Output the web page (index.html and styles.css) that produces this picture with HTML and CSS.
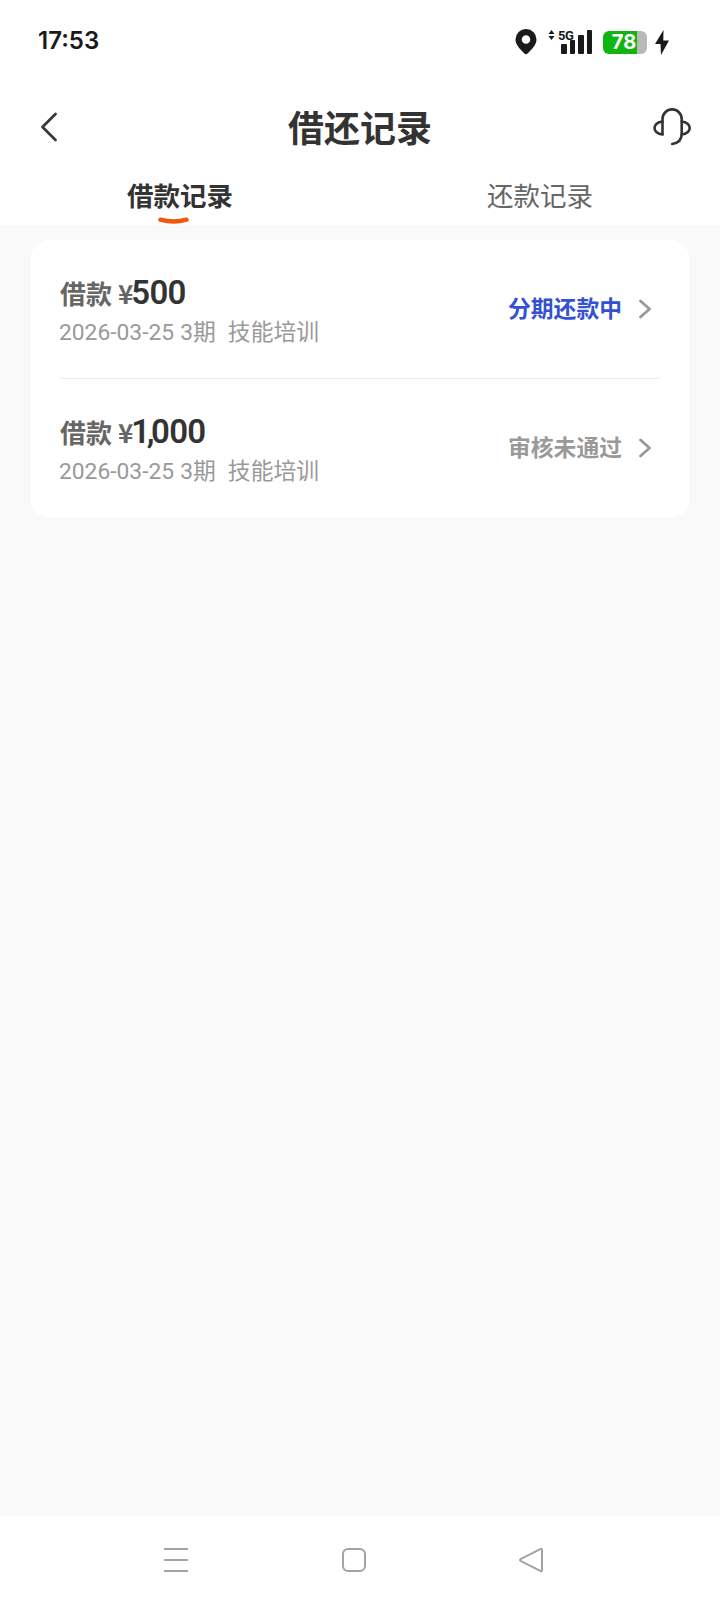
FILE: index.html
```html
<!DOCTYPE html>
<html lang="zh">
<head>
<meta charset="utf-8">
<title>借还记录</title>
<link rel="stylesheet" href="styles.css">
</head>
<body>
<div class="page">
  <header class="top">
    <div class="status">
      <span class="time">17:53</span>
      <div class="status-icons">
        <svg class="pin" width="22" height="26" viewBox="0 0 22 26"><path fill="#1a1a1a" fill-rule="evenodd" d="M11 0a10.500 10.500 0 0 1 10.500 10.500c0 5.200-4.500 9.500-8.700 13.800a2.500 2.500 0 0 1-3.600 0C5 20 .5 15.700.5 10.500A10.500 10.500 0 0 1 11 0zm0 6.200a4.300 4.300 0 1 0 0 8.600 4.300 4.300 0 0 0 0-8.600z"/></svg>
        <div class="net">
          <svg class="arrows" width="7" height="10" viewBox="0 0 7 10"><path fill="#1a1a1a" d="M3.500 0l3 4h-6zM3.500 10L.5 6h6z"/></svg>
          <span class="five-g">5G</span>
          <div class="bars"><i class="b1"></i><i class="b2"></i><i class="b3"></i><i class="b4"></i></div>
        </div>
        <div class="battery"><span class="level">78</span><span class="empty"></span></div>
        <svg class="bolt" width="14" height="25" viewBox="0 0 14 25"><path fill="#1a1a1a" d="M8.500 0L0 14h5.500L6 25l8-14.500H8.300z"/></svg>
      </div>
    </div>
    <div class="nav">
      <svg class="back" width="18" height="30" viewBox="0 0 18 30"><path fill="none" stroke="#3a3a3a" stroke-width="2.800" stroke-linecap="round" stroke-linejoin="round" d="M15.500 2L2.500 15l13 13"/></svg>
      <h1 class="title">借还记录</h1>
      <svg class="support" width="38" height="38" viewBox="0 0 38 38"><g fill="none" stroke="#333" stroke-width="2.600" stroke-linecap="round" stroke-linejoin="round"><path d="M9.500 26V11a9.600 9.600 0 0 1 19.200 0V26c0 5-3 9-9.500 10"/><path d="M9.500 13.500c-5 .5-8 3.500-8 6.500s3 6 8 6.500"/><path d="M28.700 13.500c5 .5 8 3.500 8 6.500s-3 6-8 6.500"/></g></svg>
    </div>
    <div class="tabs">
      <div class="tab active">借款记录<svg class="mark" width="31" height="9" viewBox="0 0 31 9"><path fill="none" stroke="#f5560f" stroke-width="4.500" stroke-linecap="round" d="M2.500 2.700Q15.500 6.500 28.500 2.700"/></svg></div>
      <div class="tab">还款记录</div>
    </div>
  </header>
  <main class="content">
    <section class="card">
      <div class="row">
        <div class="info">
          <div class="headline"><span class="label">借款 ¥</span><span class="amount">500</span></div>
          <div class="meta">2026-03-25 3期&nbsp;&nbsp;技能培训</div>
        </div>
        <span class="state blue">分期还款中</span>
        <svg class="chev" width="14" height="20" viewBox="0 0 14 20"><path fill="none" stroke="#999" stroke-width="2.800" stroke-linecap="round" stroke-linejoin="round" d="M2.500 2l9 8-9 8"/></svg>
      </div>
      <div class="row">
        <div class="info">
          <div class="headline"><span class="label">借款 ¥</span><span class="amount"><span class="tight">1,</span>000</span></div>
          <div class="meta">2026-03-25 3期&nbsp;&nbsp;技能培训</div>
        </div>
        <span class="state gray">审核未通过</span>
        <svg class="chev" width="14" height="20" viewBox="0 0 14 20"><path fill="none" stroke="#999" stroke-width="2.800" stroke-linecap="round" stroke-linejoin="round" d="M2.500 2l9 8-9 8"/></svg>
      </div>
    </section>
  </main>
  <footer class="softkeys">
    <div class="menu-key"><i></i><i></i><i></i></div>
    <div class="home-key"></div>
    <svg class="back-key" width="26" height="26" viewBox="0 0 26 26"><path fill="none" stroke="#a3a3a3" stroke-width="2" stroke-linejoin="round" d="M24 2.500v21a.8.800 0 0 1-1.200.700L2.500 13.800a1 1 0 0 1 0-1.700L22.800 1.800A.8.800 0 0 1 24 2.500z"/></svg>
  </footer>
</div>
</body>
</html>
```
FILE: styles.css
```css
* { box-sizing: border-box; margin: 0; padding: 0; }
html, body { background: #f9f9f9; }
body { font-family: "Roboto", "Noto Sans CJK SC", sans-serif; }
.page { width: 720px; height: 1604px; display: flex; flex-direction: column; }
.top { background: #fff; height: 225px; flex: none; }
.status { height: 80px; padding: 26px 51px 0 38px; display: flex; justify-content: space-between; align-items: flex-start; }
.time { font-family: "Inter", sans-serif; font-weight: 600; font-size: 24px; line-height: 29px; color: #1a1a1a; }
.status-icons { display: flex; align-items: center; height: 30px; margin-top: 1px; }
.pin { margin-right: 11px; }
.net { width: 44px; height: 24px; display: flex; align-items: flex-start; position: relative; margin-right: 11px; }
.arrows { margin-top: 0; }
.five-g { font-size: 13px; line-height: 11px; font-weight: 700; color: #1a1a1a; margin-left: 3px; letter-spacing: -.5px; }
.bars { position: absolute; right: 0; bottom: 0; display: flex; align-items: flex-end; gap: 3px; }
.bars i { display: block; width: 5.500px; background: #1a1a1a; border-radius: 1px; }
.b1 { height: 10px; } .b2 { height: 14px; } .b3 { height: 19px; } .b4 { height: 24px; }
.battery { width: 44px; height: 23px; display: flex; border-radius: 6px; overflow: hidden; margin-right: 8px; }
.level { width: 34px; background: #10b510; color: #fff; font-family: "Inter", sans-serif; font-weight: 700; font-size: 20px; line-height: 23px; text-align: center; padding-left: 8px; white-space: nowrap; }
.empty { flex: 1; background: #b9b9b9; }
.nav { height: 70px; margin-top: 12px; padding: 0 29px 0 40px; display: flex; align-items: center; justify-content: space-between; position: relative; }
.title { font-size: 36px; font-weight: 700; color: #333; font-family: "Noto Sans CJK SC", sans-serif; line-height: 50px; position: absolute; left: 0; right: 0; top: 9px; text-align: center; }
.tabs { display: grid; grid-template-columns: 1fr 1fr; height: 63px; }
.tab { font-family: "Noto Sans CJK SC", sans-serif; font-size: 26.500px; line-height: 38px; color: #666; text-align: center; padding-top: 14px; position: relative; }
.tab.active { color: #333; font-weight: 700; }
.mark { position: absolute; left: 158px; top: 54.500px; }
.content { flex: 1; padding: 15px 31px 0; }
.card { background: #fff; border-radius: 18px; padding: 0 29px; height: 277px; display: flex; flex-direction: column; }
.row { flex: 1; display: flex; align-items: center; padding-right: 8px; }
.row + .row { border-top: 1px solid #ededed; }
.info { flex: 1; padding-top: 4px; }
.headline { display: flex; align-items: baseline; line-height: 38px; height: 38px; }
.label { font-family: "Noto Sans CJK SC", sans-serif; font-size: 26px; font-weight: 700; color: #666; white-space: pre; }
.amount { font-family: "Roboto", sans-serif; font-size: 33px; font-weight: 600; color: #333; letter-spacing: -.7px; margin-left: -2px; }
.tight { letter-spacing: -3.400px; }
.meta { font-size: 22.800px; line-height: 32px; color: #999; margin-top: 5px; margin-left: -1px; word-spacing: .4px; }
.state { font-family: "Noto Sans CJK SC", sans-serif; font-size: 22.800px; font-weight: 700; margin-right: 16px; margin-bottom: 4px; }
.blue { color: #3451d1; }
.gray { color: #999; }
.softkeys { background: #fff; height: 88px; flex: none; position: relative; display: flex; align-items: flex-start; padding: 32px 0 0 164px; }
.menu-key { width: 24px; height: 24px; display: flex; flex-direction: column; justify-content: space-between; }
.menu-key i { display: block; height: 2px; background: #a3a3a3; }
.home-key { width: 24px; height: 24px; border: 2px solid #a3a3a3; border-radius: 6px; margin-left: 154px; }
.back-key { margin-left: 152px; margin-top: -1px; }
```
